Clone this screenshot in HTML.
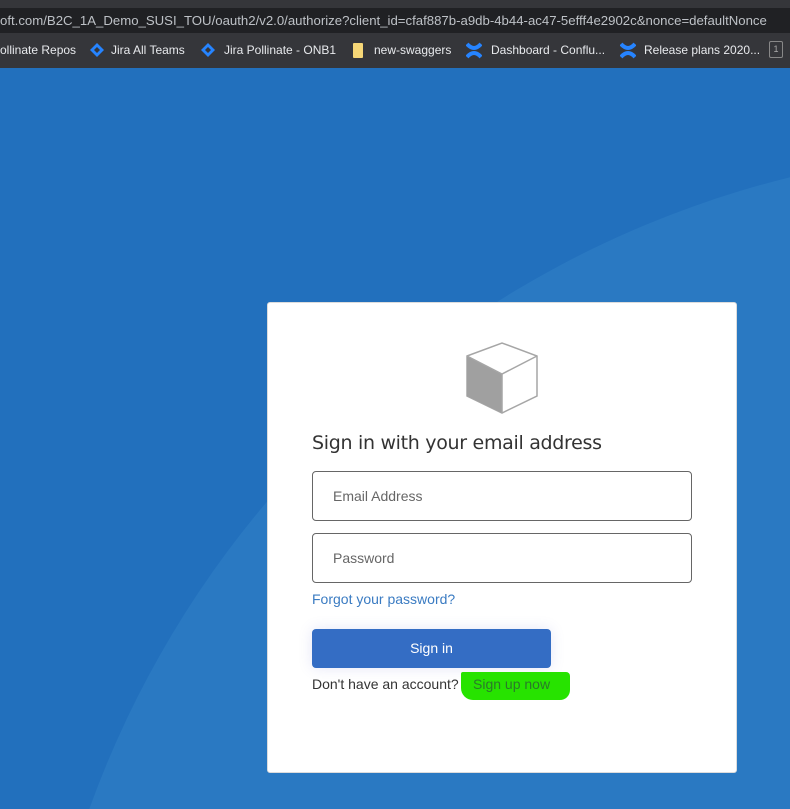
<!DOCTYPE html>
<html><head><meta charset="utf-8"><style>
*{margin:0;padding:0;box-sizing:border-box}
html,body{width:790px;height:809px;overflow:hidden}
body{position:relative;font-family:"Liberation Sans",sans-serif;background:#2270bd}
.top{position:absolute;left:0;top:0;width:790px;height:8px;background:#35363a}
.url{position:absolute;left:0;top:8px;width:790px;height:25px;background:#202124;color:#bdc1c6;font-size:13.2px;line-height:25px;white-space:nowrap;overflow:hidden}
.bm{position:absolute;left:0;top:33px;width:790px;height:35px;background:#35363a;color:#e8eaed;font-size:12px;line-height:34px;white-space:nowrap;overflow:hidden}
.bm span{position:absolute;top:0}
.bg{position:absolute;left:0;top:68px;width:790px;height:741px;overflow:hidden;background:#2270bd}
.arc{position:absolute;left:30px;top:80px;width:2000px;height:2000px;border-radius:50%;background:#2a79c2}
.card{position:absolute;left:267px;top:302px;width:470px;height:471px;background:#fff;border:1px solid #dcdcdc;border-radius:3px}
h1{position:absolute;left:312px;top:432px;font-size:19px;font-weight:normal;color:#333;font-family:"DejaVu Sans","Liberation Sans",sans-serif;letter-spacing:-0.3px;white-space:nowrap}
.in{position:absolute;left:312px;width:380px;height:50px;border:1px solid #666;border-radius:4px;font-size:14px;color:#666;line-height:48px;padding-left:20px}
.fp{position:absolute;left:312px;top:591px;font-size:14px;color:#3a7bc2}
.btn{position:absolute;left:312px;top:629px;width:239px;height:39px;background:#346dc4;border-radius:4px;color:#fff;font-size:14px;text-align:center;line-height:39px;box-shadow:0 0 14px rgba(80,90,200,0.15)}
.dh{position:absolute;left:312px;top:676px;font-size:14px;color:#333}
.hl{position:absolute;left:461px;top:672px;width:109px;height:28px;background:#27e300;border-radius:2px 4px 10px 12px}
.su{position:absolute;left:473px;top:676px;font-size:14px;color:#2a7a2a}
</style></head><body>
<div class="top"></div>
<div class="url">oft.com/B2C_1A_Demo_SUSI_TOU/oauth2/v2.0/authorize?client_id=cfaf887b-a9db-4b44-ac47-5efff4e2902c&amp;nonce=defaultNonce</div>
<div class="bm">
<span style="left:0">ollinate Repos</span>
<svg style="position:absolute;left:90px;top:10px" width="14" height="14"><path d="M7 0L14 7L7 14L0 7Z" fill="#2684ff"/><path d="M7 4L10 7L7 10L4 7Z" fill="#35363a"/></svg>
<span style="left:111px">Jira All Teams</span>
<svg style="position:absolute;left:201px;top:10px" width="14" height="14"><path d="M7 0L14 7L7 14L0 7Z" fill="#2684ff"/><path d="M7 4L10 7L7 10L4 7Z" fill="#35363a"/></svg>
<span style="left:224px">Jira Pollinate - ONB1</span>
<div style="position:absolute;left:353px;top:10px;width:10px;height:15px;background:#f6d777;border-radius:1px"></div>
<span style="left:374px">new-swaggers</span>
<svg style="position:absolute;left:466px;top:9px" width="16" height="17"><path d="M1 2Q8 10 15 2M1 15Q8 7 15 15" stroke="#2684ff" stroke-width="4" fill="none"/></svg>
<span style="left:491px">Dashboard - Conflu...</span>
<svg style="position:absolute;left:620px;top:9px" width="16" height="17"><path d="M1 2Q8 10 15 2M1 15Q8 7 15 15" stroke="#2684ff" stroke-width="4" fill="none"/></svg>
<span style="left:644px">Release plans 2020...</span>
<div style="position:absolute;left:769px;top:8px;width:14px;height:17px;border:1.5px solid #888;border-radius:2px;font-size:9px;color:#aaa;text-align:center;line-height:14px">1</div>
</div>
<div class="bg"><div class="arc"></div></div>
<div class="card"></div>
<svg style="position:absolute;left:465px;top:341px" width="75" height="74">
<path d="M2 15L37 2L72 15L72 55L37 72L2 55Z" fill="#fff" stroke="#a6a6a6" stroke-width="1.5"/>
<path d="M2 15L37 33L37 72L2 55Z" fill="#a0a0a0"/>
<path d="M2 15L37 33L72 15M37 33L37 72" stroke="#a6a6a6" stroke-width="1.5" fill="none"/>
</svg>
<h1>Sign in with your email address</h1>
<div class="in" style="top:471px">Email Address</div>
<div class="in" style="top:533px">Password</div>
<div class="fp">Forgot your password?</div>
<div class="btn">Sign in</div>
<div class="dh">Don't have an account?</div>
<div class="hl"></div>
<div class="su">Sign up now</div>
</body></html>
